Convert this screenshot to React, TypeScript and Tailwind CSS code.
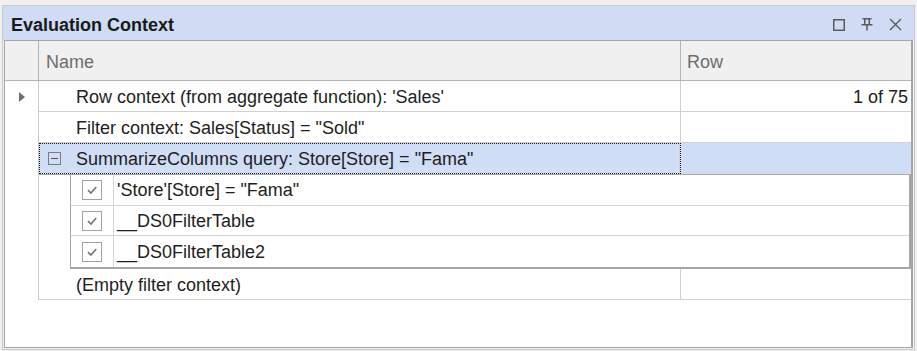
import React from "react";

const Check = () => (
  <div className="w-[20px] h-[20px] border border-[#a3a3a3] bg-white flex items-center justify-center">
    <svg width="14" height="14" viewBox="0 0 14 14">
      <path d="M3 7.2 L5.9 10 L11.2 4" fill="none" stroke="#757575" strokeWidth="1.6" />
    </svg>
  </div>
);

const ChildRow = ({ text, last }: { text: string; last?: boolean }) => (
  <div className={`flex h-[31px] ${last ? "" : "border-b border-[#d4d4d4]"}`}>
    <div className="w-[43px] shrink-0 border-r border-[#d4d4d4] flex items-center justify-center">
      <Check />
    </div>
    <div className="flex-1 flex items-center pl-[3px] pt-[2px]">{text}</div>
  </div>
);

export default function App() {
  return (
    <div className="w-[917px] h-[351px] bg-[#f0f0f0] pt-[5px] pl-[2px] pr-[2px] pb-[1px] overflow-hidden font-['Liberation_Sans',Arial,sans-serif] text-[18px] text-[#1e1e1e]">
      <div className="h-full border border-[#cacaca] flex flex-col bg-[#f0f0f0]">
        {/* Title bar */}
        <div className="h-[34px] shrink-0 bg-[#cfdcf4] flex items-center pl-[8px] pr-[12px]">
          <div className="font-bold text-[18px] text-[#1a1a1a] pt-[5px]">Evaluation Context</div>
          <div className="ml-auto flex items-center gap-[16px] pt-[3px]">
            <svg width="12" height="12" viewBox="0 0 12 12">
              <rect x="0.75" y="0.75" width="10.5" height="10.5" fill="none" stroke="#5a5a5a" strokeWidth="1.5" />
            </svg>
            <svg width="12" height="13" viewBox="0 0 12 13">
              <path d="M1.5 0.75 H10.5 M3.75 0.75 V6.5 M8.25 0.75 V6.5 M0.5 6.75 H11.5 M6 6.75 V12.5" fill="none" stroke="#5a5a5a" strokeWidth="1.5" />
            </svg>
            <svg width="13" height="13" viewBox="0 0 13 13">
              <path d="M1 1 L12 12 M12 1 L1 12" fill="none" stroke="#5a5a5a" strokeWidth="1.4" />
            </svg>
          </div>
        </div>
        {/* Grid */}
        <div className="flex-1 ml-[1px] mr-[1px] mb-[1px] border-l border-t border-b border-r-2 border-[#a6a6a6] bg-white flex flex-col">
          {/* Header */}
          <div className="flex h-[40px] shrink-0 bg-[#f0f0f0] border-b border-[#b4b4b4] text-[#6d6d6d]">
            <div className="w-[34px] shrink-0 border-r border-[#b4b4b4]" />
            <div className="w-[642px] shrink-0 border-r border-[#b4b4b4] flex items-center pl-[7px] pt-[3px]">Name</div>
            <div className="flex-1 flex items-center pl-[6px] pt-[3px]">Row</div>
          </div>
          {/* Row 1 */}
          <div className="flex h-[31px] shrink-0">
            <div className="w-[34px] shrink-0 border-r border-[#c8c8c8] flex items-center justify-center">
              <svg width="6" height="10" viewBox="0 0 6 10">
                <path d="M0 0 L6 5 L0 10 Z" fill="#707070" />
              </svg>
            </div>
            <div className="w-[642px] shrink-0 border-r border-b border-[#d0d0d0] flex items-center pl-[37px] pt-[2px]">
              Row context (from aggregate function): 'Sales'
            </div>
            <div className="flex-1 border-b border-[#d0d0d0] flex items-center justify-end pr-[3px] pt-[2px]">1 of 75</div>
          </div>
          {/* Row 2 */}
          <div className="flex h-[31px] shrink-0">
            <div className="w-[34px] shrink-0 border-r border-[#c8c8c8]" />
            <div className="w-[642px] shrink-0 border-r border-b border-[#d0d0d0] flex items-center pl-[37px] pt-[2px]">
              Filter context: Sales[Status] = "Sold"
            </div>
            <div className="flex-1 border-b border-[#d0d0d0]" />
          </div>
          {/* Row 3 selected */}
          <div className="flex h-[32px] shrink-0">
            <div className="w-[34px] shrink-0 border-r border-[#c8c8c8]" />
            <div className="flex-1 flex bg-[#cfddf5] border-b border-[#a8a8a8]">
              <div className="w-[642px] shrink-0 border-r border-[#d0d0d0] ml-[-1px] pl-[1px]">
                <div className="h-full w-[642px] border border-dotted border-[#1a1a2a] flex items-center pl-[8px]">
                  <svg width="13" height="13" viewBox="0 0 13 13" className="shrink-0">
                    <rect x="0.5" y="0.5" width="12" height="12" fill="none" stroke="#7c7c7c" strokeWidth="1" />
                    <path d="M3 6.5 H10" stroke="#555" strokeWidth="1" />
                  </svg>
                  <span className="ml-[15px] pt-[2px]">SummarizeColumns query: Store[Store] = "Fama"</span>
                </div>
              </div>
              <div className="flex-1" />
            </div>
          </div>
          {/* Child grid */}
          <div className="flex h-[94px] shrink-0">
            <div className="w-[34px] shrink-0 border-r border-[#c8c8c8]" />
            <div className="w-[31px] shrink-0" />
            <div className="flex-1 border-l border-[#a6a6a6] border-r-2 border-b-2 flex flex-col">
              <ChildRow text={`'Store'[Store] = "Fama"`} />
              <ChildRow text="__DS0FilterTable" />
              <ChildRow text="__DS0FilterTable2" last />
            </div>
          </div>
          {/* Empty filter context */}
          <div className="flex h-[31px] shrink-0">
            <div className="w-[34px] shrink-0 border-r border-[#c8c8c8]" />
            <div className="w-[642px] shrink-0 border-r border-b border-[#d0d0d0] flex items-center pl-[37px] pt-[2px]">
              (Empty filter context)
            </div>
            <div className="flex-1 border-b border-[#d0d0d0]" />
          </div>
          <div className="flex-1" />
        </div>
      </div>
    </div>
  );
}
